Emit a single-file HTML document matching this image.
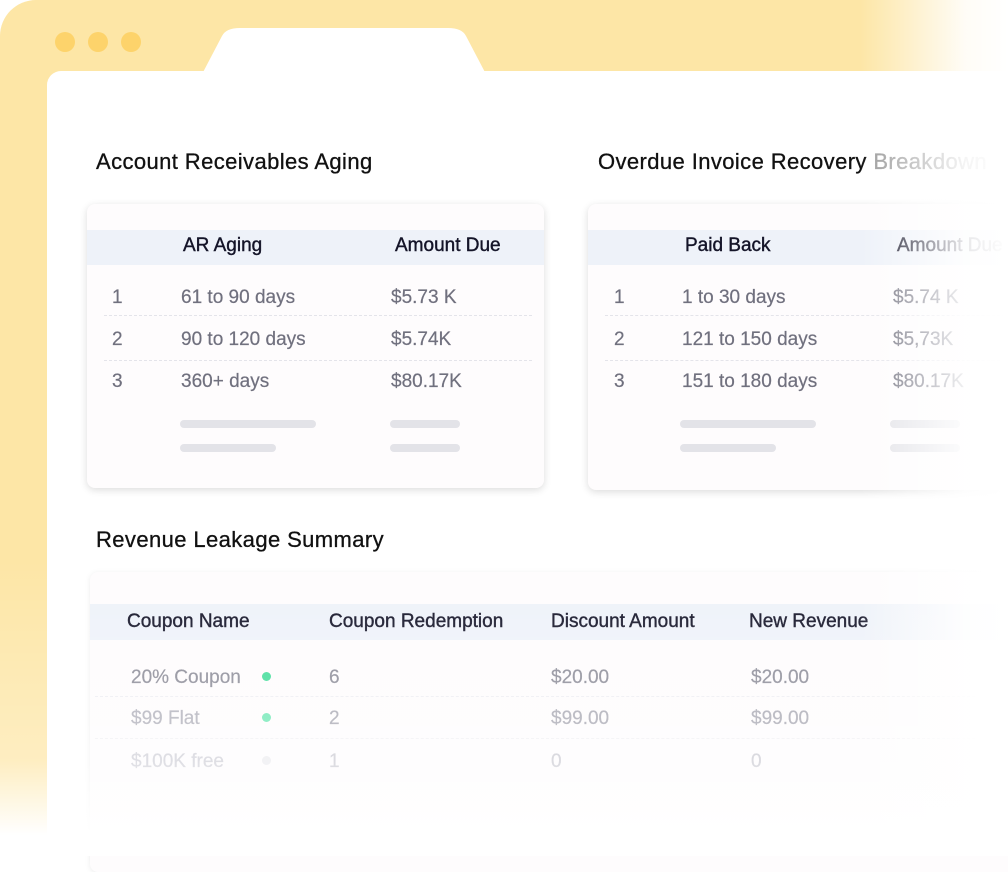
<!DOCTYPE html>
<html><head><meta charset="utf-8"><style>
*{margin:0;padding:0;box-sizing:border-box}
body{width:1008px;height:856px;overflow:hidden;background:#fff;font-family:"Liberation Sans",sans-serif;position:relative}
.a{position:absolute}
.bg{left:0;top:0;width:1008px;height:856px;background:#fde6a6;border-top-left-radius:36px}
.dot{width:20px;height:20px;border-radius:50%;background:#fdd36b;top:32px}
.tab{left:200px;top:28px;width:288px;height:50px;background:#fff;clip-path:path('M0 50 L22 8 Q26 0 40 0 L248 0 Q262 0 266 8 L288 50 Z')}
.panel{left:47px;top:71px;width:1000px;height:800px;background:#fff;border-top-left-radius:14px}
.t{font-size:22px;letter-spacing:.4px;color:#111;-webkit-text-stroke:.3px #111}
.card{background:#fefcfd;border-radius:8px;box-shadow:0 2px 8px rgba(0,0,0,.14)}
.hd{background:#eef2f9}
.h{font-size:19px;color:#141428;-webkit-text-stroke:.4px #141428}
.r{font-size:19px;color:#70707e;-webkit-text-stroke:.2px currentColor}
.dash{height:0;border-top:1.5px dashed #e4e4ea}
.bar{height:8px;border-radius:4px;background:#e3e3e8}
.gd{width:9px;height:9px;border-radius:50%}
</style></head><body>
<div class="a bg"></div>
<div class="a dot" style="left:55px"></div>
<div class="a dot" style="left:88px"></div>
<div class="a dot" style="left:121px"></div>
<div class="a tab"></div>
<div class="a panel"></div>

<div class="a t" style="left:96px;top:149px">Account Receivables Aging</div>
<div class="a t" style="left:598px;top:149px">Overdue Invoice Recovery <span style="color:#999;-webkit-text-stroke-color:#999">Breakdown</span></div>

<div class="a card" style="left:87px;top:204px;width:457px;height:284px"></div>
<div class="a hd" style="left:87px;top:230px;width:457px;height:35px"></div>
<div class="a h" style="left:183px;top:235px">AR Aging</div>
<div class="a h" style="left:395px;top:235px">Amount Due</div>
<div class="a r" style="left:112px;top:287px">1</div><div class="a r" style="left:181px;top:287px">61 to 90 days</div><div class="a r" style="left:391px;top:287px">$5.73 K</div>
<div class="a dash" style="left:104px;top:315px;width:428px"></div>
<div class="a r" style="left:112px;top:329px">2</div><div class="a r" style="left:181px;top:329px">90 to 120 days</div><div class="a r" style="left:391px;top:329px">$5.74K</div>
<div class="a dash" style="left:104px;top:360px;width:428px"></div>
<div class="a r" style="left:112px;top:371px">3</div><div class="a r" style="left:181px;top:371px">360+ days</div><div class="a r" style="left:391px;top:371px">$80.17K</div>
<div class="a bar" style="left:180px;top:420px;width:136px"></div>
<div class="a bar" style="left:390px;top:420px;width:70px"></div>
<div class="a bar" style="left:180px;top:444px;width:96px"></div>
<div class="a bar" style="left:390px;top:444px;width:70px"></div>

<div class="a card" style="left:588px;top:204px;width:457px;height:286px"></div>
<div class="a hd" style="left:588px;top:230px;width:457px;height:35px"></div>
<div class="a h" style="left:685px;top:235px">Paid Back</div>
<div class="a h" style="left:897px;top:235px">Amount Due</div>
<div class="a r" style="left:614px;top:287px">1</div><div class="a r" style="left:682px;top:287px">1 to 30 days</div><div class="a r" style="left:893px;top:287px">$5.74 K</div>
<div class="a dash" style="left:605px;top:315px;width:420px"></div>
<div class="a r" style="left:614px;top:329px">2</div><div class="a r" style="left:682px;top:329px">121 to 150 days</div><div class="a r" style="left:893px;top:329px">$5,73K</div>
<div class="a dash" style="left:605px;top:360px;width:420px"></div>
<div class="a r" style="left:614px;top:371px">3</div><div class="a r" style="left:682px;top:371px">151 to 180 days</div><div class="a r" style="left:893px;top:371px">$80.17K</div>
<div class="a bar" style="left:680px;top:420px;width:136px"></div>
<div class="a bar" style="left:890px;top:420px;width:70px"></div>
<div class="a bar" style="left:680px;top:444px;width:96px"></div>
<div class="a bar" style="left:890px;top:444px;width:70px"></div>

<div class="a t" style="left:96px;top:527px">Revenue Leakage Summary</div>
<div class="a card" style="left:90px;top:572px;width:940px;height:300px;box-shadow:0 1px 6px rgba(0,0,0,.08)"></div>
<div class="a hd" style="left:90px;top:604px;width:940px;height:36px"></div>
<div class="a h" style="left:127px;top:611px">Coupon Name</div>
<div class="a h" style="left:329px;top:611px">Coupon Redemption</div>
<div class="a h" style="left:551px;top:611px">Discount Amount</div>
<div class="a h" style="left:749px;top:611px">New Revenue</div>
<div class="a r" style="left:131px;top:667px;color:#8a8a96">20% Coupon</div><div class="a gd" style="left:262px;top:672px;background:#3ddc97"></div>
<div class="a r" style="left:329px;top:667px;color:#8a8a96">6</div><div class="a r" style="left:551px;top:667px;color:#8a8a96">$20.00</div><div class="a r" style="left:751px;top:667px;color:#8a8a96">$20.00</div>
<div class="a dash" style="left:95px;top:696px;width:880px;border-color:#eeeef2"></div>
<div class="a r" style="left:131px;top:708px;color:#b0b0ba">$99 Flat</div><div class="a gd" style="left:262px;top:713px;background:#6ee8b4"></div>
<div class="a r" style="left:329px;top:708px;color:#a8a8b2">2</div><div class="a r" style="left:551px;top:708px;color:#a8a8b2">$99.00</div><div class="a r" style="left:751px;top:708px;color:#a8a8b2">$99.00</div>
<div class="a dash" style="left:95px;top:738px;width:880px;border-color:#f1f1f4"></div>
<div class="a r" style="left:131px;top:751px;color:#d0d0d8">$100K free</div><div class="a gd" style="left:262px;top:756px;background:#ececf0"></div>
<div class="a r" style="left:329px;top:751px;color:#cacad2">1</div><div class="a r" style="left:551px;top:751px;color:#cacad2">0</div><div class="a r" style="left:751px;top:751px;color:#cacad2">0</div>

<div class="a" style="left:0;top:0;width:1008px;height:856px;background:linear-gradient(90deg,rgba(255,255,255,0) 0,rgba(255,255,255,0) 860px,rgba(255,255,255,.9) 965px,#fff 1008px)"></div>
<div class="a" style="left:0;top:560px;width:1008px;height:296px;background:linear-gradient(180deg,rgba(255,255,255,0) 0,rgba(255,255,255,.3) 200px,#fff 275px)"></div>
</body></html>
